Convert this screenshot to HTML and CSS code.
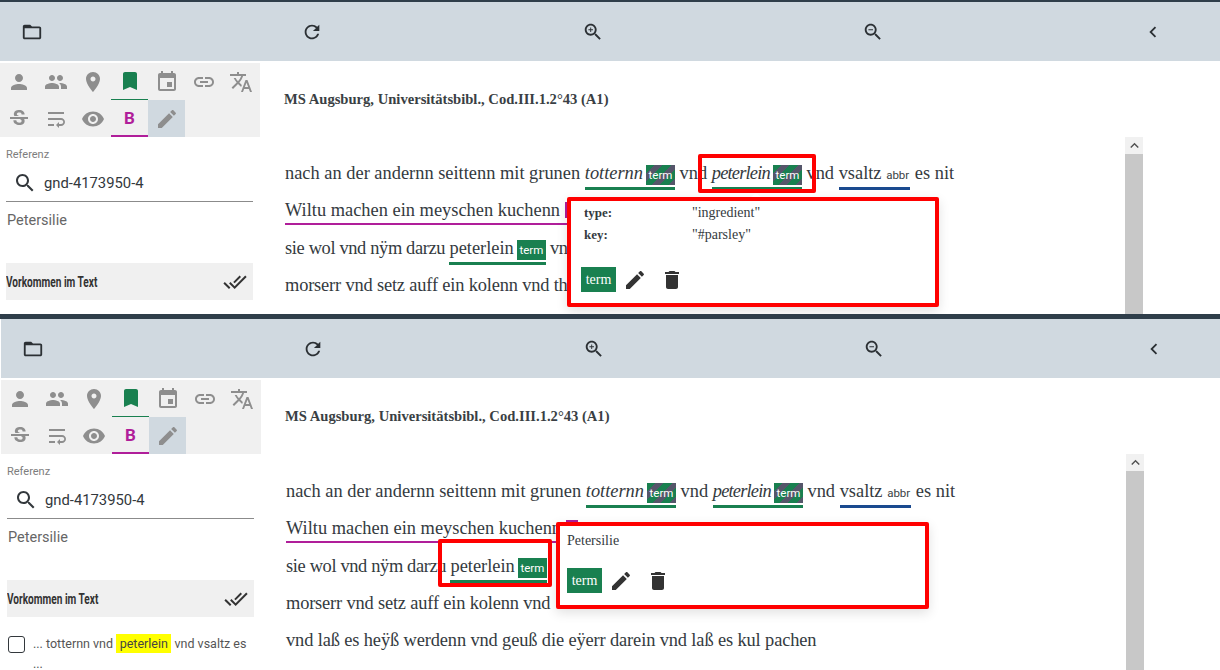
FILE: index.html
```html
<!DOCTYPE html>
<html lang="en">
  <head>
    <meta charset="UTF-8" />
    <title>Annotation</title>
    <link rel="stylesheet" href="styles.css">
  </head>
  <body>
    <svg class="sprite" xmlns="http://www.w3.org/2000/svg">
      <symbol id="i-folder" viewBox="0 0 24 24"><path d="M20 6h-8l-2-2H4c-1.1 0-1.99.9-1.99 2L2 18c0 1.1.9 2 2 2h16c1.1 0 2-.9 2-2V8c0-1.1-.9-2-2-2zm0 12H4V8h16v10z"/></symbol>
      <symbol id="i-refresh" viewBox="0 0 24 24"><path d="M17.65 6.35C16.2 4.9 14.21 4 12 4c-4.42 0-7.99 3.58-7.99 8s3.57 8 7.99 8c3.73 0 6.84-2.55 7.73-6h-2.08c-.82 2.33-3.04 4-5.65 4-3.31 0-6-2.69-6-6s2.69-6 6-6c1.66 0 3.14.69 4.22 1.78L13 11h7V4l-2.35 2.35z"/></symbol>
      <symbol id="i-zoomin" viewBox="0 0 24 24"><path d="M15.5 14h-.79l-.28-.27C15.41 12.59 16 11.11 16 9.5 16 5.91 13.09 3 9.5 3S3 5.91 3 9.5 5.91 16 9.5 16c1.61 0 3.09-.59 4.23-1.57l.27.28v.79l5 4.99L20.49 19l-4.99-5zm-6 0C7.01 14 5 11.99 5 9.5S7.01 5 9.5 5 14 7.01 14 9.5 11.99 14 9.5 14zm2.5-4h-2v2H9v-2H7V9h2V7h1v2h2v1z"/></symbol>
      <symbol id="i-zoomout" viewBox="0 0 24 24"><path d="M15.5 14h-.79l-.28-.27C15.41 12.59 16 11.11 16 9.5 16 5.91 13.09 3 9.5 3S3 5.91 3 9.5 5.91 16 9.5 16c1.61 0 3.09-.59 4.23-1.57l.27.28v.79l5 4.99L20.49 19l-4.99-5zm-6 0C7.01 14 5 11.99 5 9.5S7.01 5 9.5 5 14 7.01 14 9.5 11.99 14 9.5 14zM7 9h5v1H7z"/></symbol>
      <symbol id="i-left" viewBox="0 0 24 24"><path d="M15.41 7.41L14 6l-6 6 6 6 1.41-1.41L10.83 12z"/></symbol>
      <symbol id="i-person" viewBox="0 0 24 24"><path d="M12 12c2.21 0 4-1.79 4-4s-1.79-4-4-4-4 1.79-4 4 1.79 4 4 4zm0 2c-2.67 0-8 1.34-8 4v2h16v-2c0-2.66-5.33-4-8-4z"/></symbol>
      <symbol id="i-people" viewBox="0 0 24 24"><path d="M16 11c1.66 0 2.99-1.34 2.99-3S17.66 5 16 5c-1.66 0-3 1.34-3 3s1.34 3 3 3zm-8 0c1.66 0 2.99-1.34 2.99-3S9.66 5 8 5C6.34 5 5 6.34 5 8s1.34 3 3 3zm0 2c-2.33 0-7 1.17-7 3.5V19h14v-2.5c0-2.33-4.67-3.5-7-3.5zm8 0c-.29 0-.62.02-.97.05 1.16.84 1.97 1.97 1.97 3.45V19h6v-2.5c0-2.33-4.67-3.5-7-3.5z"/></symbol>
      <symbol id="i-place" viewBox="0 0 24 24"><path d="M12 2C8.13 2 5 5.13 5 9c0 5.25 7 13 7 13s7-7.75 7-13c0-3.87-3.13-7-7-7zm0 9.5c-1.38 0-2.5-1.12-2.5-2.5s1.12-2.5 2.5-2.5 2.5 1.12 2.5 2.5-1.12 2.5-2.5 2.5z"/></symbol>
      <symbol id="i-bookmark" viewBox="0 0 24 24"><path d="M17 3H7c-1.1 0-1.99.9-1.99 2L5 21l7-3 7 3V5c0-1.1-.9-2-2-2z"/></symbol>
      <symbol id="i-event" viewBox="0 0 24 24"><path d="M17 12h-5v5h5v-5zM16 1v2H8V1H6v2H5c-1.11 0-1.99.9-1.99 2L3 19c0 1.1.89 2 2 2h14c1.1 0 2-.9 2-2V5c0-1.1-.9-2-2-2h-1V1h-2zm3 18H5V8h14v11z"/></symbol>
      <symbol id="i-link" viewBox="0 0 24 24"><path d="M3.9 12c0-1.71 1.39-3.1 3.1-3.1h4V7H7c-2.76 0-5 2.24-5 5s2.24 5 5 5h4v-1.9H7c-1.71 0-3.1-1.39-3.1-3.1zM8 13h8v-2H8v2zm9-6h-4v1.9h4c1.71 0 3.1 1.39 3.1 3.1s-1.39 3.1-3.1 3.1h-4V17h4c2.76 0 5-2.24 5-5s-2.24-5-5-5z"/></symbol>
      <symbol id="i-translate" viewBox="0 0 24 24"><path d="M12.87 15.07l-2.54-2.51.03-.03c1.74-1.94 2.98-4.17 3.71-6.53H17V4h-7V2H8v2H1v1.99h11.17C11.5 7.92 10.44 9.75 9 11.35 8.07 10.32 7.3 9.19 6.69 8h-2c.73 1.63 1.73 3.17 2.98 4.56l-5.09 5.02L4 19l5-5 3.11 3.11.76-2.04zM18.5 10h-2L12 22h2l1.12-3h4.75L21 22h2l-4.5-12zm-2.62 7l1.62-4.33L19.12 17h-3.24z"/></symbol>
      <symbol id="i-strike" viewBox="0 0 24 24"><path d="M7.24 8.75c-.26-.48-.39-1.03-.39-1.67 0-.61.13-1.16.4-1.67.26-.5.63-.93 1.11-1.29.48-.35 1.05-.63 1.7-.83.66-.19 1.39-.29 2.18-.29.81 0 1.54.11 2.21.34.66.22 1.23.54 1.69.94.47.4.83.88 1.08 1.43.25.55.38 1.15.38 1.81h-3.01c0-.31-.05-.59-.15-.85-.09-.27-.24-.49-.44-.68-.2-.19-.45-.33-.75-.44-.3-.1-.66-.16-1.06-.16-.39 0-.74.04-1.03.13-.29.09-.53.21-.72.36-.19.16-.34.34-.44.55-.1.21-.15.43-.15.66 0 .48.25.88.74 1.21.38.25.77.48 1.41.7H7.39c-.05-.08-.11-.17-.15-.25zM21 12v-2H3v2h9.62c.18.07.4.14.55.2.37.17.66.34.87.51.21.17.35.36.43.57.07.2.11.43.11.69 0 .23-.05.45-.14.66-.09.2-.23.38-.42.53-.19.15-.42.26-.71.35-.29.08-.63.13-1.01.13-.43 0-.83-.04-1.18-.13s-.66-.23-.91-.42c-.25-.19-.45-.44-.59-.75-.14-.31-.25-.76-.25-1.21H6.4c0 .55.08 1.13.24 1.58.16.45.37.85.65 1.21.28.35.6.66.98.92.37.26.78.48 1.22.65.44.17.9.3 1.38.39.48.08.96.13 1.44.13.8 0 1.53-.09 2.18-.28s1.21-.45 1.67-.79c.46-.34.82-.77 1.07-1.27s.38-1.07.38-1.71c0-.6-.1-1.14-.31-1.61-.05-.11-.11-.23-.17-.33H21z"/></symbol>
      <symbol id="i-wrap" viewBox="0 0 24 24"><path d="M4 19h6v-2H4v2zM20 5H4v2h16V5zm-3 6H4v2h13.25c1.1 0 2 .9 2 2s-.9 2-2 2H15v-2l-3 3 3 3v-2h2c2.21 0 4-1.79 4-4s-1.79-4-4-4z"/></symbol>
      <symbol id="i-eye" viewBox="0 0 24 24"><path d="M12 4.5C7 4.5 2.73 7.61 1 12c1.73 4.39 6 7.5 11 7.5s9.27-3.11 11-7.5c-1.73-4.39-6-7.5-11-7.5zM12 17c-2.76 0-5-2.24-5-5s2.24-5 5-5 5 2.24 5 5-2.24 5-5 5zm0-8c-1.66 0-3 1.34-3 3s1.34 3 3 3 3-1.34 3-3-1.34-3-3-3z"/></symbol>
      <symbol id="i-edit" viewBox="0 0 24 24"><path d="M3 17.25V21h3.75L17.81 9.94l-3.75-3.75L3 17.25zM20.71 7.04c.39-.39.39-1.02 0-1.41l-2.34-2.34c-.39-.39-1.02-.39-1.41 0l-1.83 1.83 3.75 3.75 1.83-1.83z"/></symbol>
      <symbol id="i-delete" viewBox="0 0 24 24"><path d="M6 19c0 1.1.9 2 2 2h8c1.1 0 2-.9 2-2V7H6v12zM19 4h-3.5l-1-1h-5l-1 1H5v2h14V4z"/></symbol>
      <symbol id="i-search" viewBox="0 0 24 24"><path d="M15.5 14h-.79l-.28-.27C15.41 12.59 16 11.11 16 9.5 16 5.91 13.09 3 9.5 3S3 5.91 3 9.5 5.91 16 9.5 16c1.61 0 3.09-.59 4.23-1.57l.27.28v.79l5 4.99L20.49 19l-4.99-5zm-6 0C7.01 14 5 11.99 5 9.5S7.01 5 9.5 5 14 7.01 14 9.5 11.99 14 9.5 14z"/></symbol>
      <symbol id="i-doneall" viewBox="0 0 24 24"><path d="M18 7l-1.41-1.41-6.34 6.34 1.41 1.41L18 7zm4.24-1.41L11.66 16.17 7.48 12l-1.41 1.41L11.66 19l12-12-1.42-1.41zM.41 13.41L6 19l1.41-1.41L1.83 12 .41 13.41z"/></symbol>
      <symbol id="i-up" viewBox="0 0 24 24"><path d="M12 8l-6 6 1.41 1.41L12 10.83l4.59 4.58L18 14z"/></symbol>
    </svg>

    <!-- first screenshot -->
    <section class="shot shot-first">
      <div class="toolbar">
        <span class="tool"><svg class="icon"><use href="#i-folder"/></svg></span>
        <span class="tool"><svg class="icon"><use href="#i-refresh"/></svg></span>
        <span class="tool"><svg class="icon"><use href="#i-zoomin"/></svg></span>
        <span class="tool"><svg class="icon"><use href="#i-zoomout"/></svg></span>
        <span class="tool"><svg class="icon"><use href="#i-left"/></svg></span>
      </div>
      <div class="work">
        <aside class="side">
          <div class="tabs">
            <span class="tab"><svg class="icon"><use href="#i-person"/></svg></span>
            <span class="tab"><svg class="icon"><use href="#i-people"/></svg></span>
            <span class="tab"><svg class="icon"><use href="#i-place"/></svg></span>
            <span class="tab tab-green"><svg class="icon"><use href="#i-bookmark"/></svg></span>
            <span class="tab"><svg class="icon"><use href="#i-event"/></svg></span>
            <span class="tab"><svg class="icon"><use href="#i-link"/></svg></span>
            <span class="tab"><svg class="icon"><use href="#i-translate"/></svg></span>
            <span class="tab"><svg class="icon"><use href="#i-strike"/></svg></span>
            <span class="tab"><svg class="icon"><use href="#i-wrap"/></svg></span>
            <span class="tab"><svg class="icon"><use href="#i-eye"/></svg></span>
            <span class="tab tab-pink">B</span>
            <span class="tab tab-on"><svg class="icon"><use href="#i-edit"/></svg></span>
          </div>
          <div class="field-label">Referenz</div>
          <div class="field">
            <svg class="icon"><use href="#i-search"/></svg>
            <span>gnd-4173950-4</span>
          </div>
          <div class="field-name">Petersilie</div>
          <div class="occur">
            <span class="occur-title">Vorkommen im Text</span>
            <svg class="icon"><use href="#i-doneall"/></svg>
          </div>
        </aside>
        <main class="page">
          <h1 class="page-title">MS Augsburg, Universitätsbibl., Cod.III.1.2°43 (A1)</h1>
          <div class="reader">
            <div class="lines">
              <p class="line">nach an der andernn seittenn mit grunen <span class="ann ann-green"><i>totternn</i> <b class="tag tag-striped">term</b></span> vnd <span class="ann ann-green"><i class="narrow">peterlein</i> <b class="tag tag-striped">term</b></span> vnd <span class="ann ann-blue">vsaltz <b class="tag tag-plain">abbr</b></span> es nit</p>
              <p class="line"><span class="ann ann-pink">Wiltu machen ein meyschen kuchenn <b class="tag tag-pink"></b></span></p>
              <p class="line line-tight">sie wol vnd nÿm darzu <span class="ann ann-green">peterlein <b class="tag tag-solid">term</b></span> vnd</p>
              <p class="line line-snug">morserr vnd setz auff ein kolenn vnd thu</p>
            </div>
            <div class="scrollbar"><span class="scroll-up"><svg class="icon"><use href="#i-up"/></svg></span></div>
          </div>
        </main>
      </div>
      <div class="mark mark-a"></div>
      <div class="pop pop-a">
        <dl class="pop-attrs">
          <dt>type:</dt><dd>"ingredient"</dd>
          <dt>key:</dt><dd>"#parsley"</dd>
        </dl>
        <div class="pop-actions">
          <span class="pop-tag">term</span>
          <svg class="icon"><use href="#i-edit"/></svg>
          <svg class="icon"><use href="#i-delete"/></svg>
        </div>
      </div>
    </section>

    <!-- second screenshot -->
    <section class="shot shot-second">
      <div class="toolbar">
        <span class="tool"><svg class="icon"><use href="#i-folder"/></svg></span>
        <span class="tool"><svg class="icon"><use href="#i-refresh"/></svg></span>
        <span class="tool"><svg class="icon"><use href="#i-zoomin"/></svg></span>
        <span class="tool"><svg class="icon"><use href="#i-zoomout"/></svg></span>
        <span class="tool"><svg class="icon"><use href="#i-left"/></svg></span>
      </div>
      <div class="work">
        <aside class="side">
          <div class="tabs">
            <span class="tab"><svg class="icon"><use href="#i-person"/></svg></span>
            <span class="tab"><svg class="icon"><use href="#i-people"/></svg></span>
            <span class="tab"><svg class="icon"><use href="#i-place"/></svg></span>
            <span class="tab tab-green"><svg class="icon"><use href="#i-bookmark"/></svg></span>
            <span class="tab"><svg class="icon"><use href="#i-event"/></svg></span>
            <span class="tab"><svg class="icon"><use href="#i-link"/></svg></span>
            <span class="tab"><svg class="icon"><use href="#i-translate"/></svg></span>
            <span class="tab"><svg class="icon"><use href="#i-strike"/></svg></span>
            <span class="tab"><svg class="icon"><use href="#i-wrap"/></svg></span>
            <span class="tab"><svg class="icon"><use href="#i-eye"/></svg></span>
            <span class="tab tab-pink">B</span>
            <span class="tab tab-on"><svg class="icon"><use href="#i-edit"/></svg></span>
          </div>
          <div class="field-label">Referenz</div>
          <div class="field">
            <svg class="icon"><use href="#i-search"/></svg>
            <span>gnd-4173950-4</span>
          </div>
          <div class="field-name">Petersilie</div>
          <div class="occur">
            <span class="occur-title">Vorkommen im Text</span>
            <svg class="icon"><use href="#i-doneall"/></svg>
          </div>
          <div class="hit">
            <span class="check"></span>
            <span class="hit-text">... totternn vnd <span class="hl">peterlein</span> vnd vsaltz es ...</span>
          </div>
        </aside>
        <main class="page">
          <h1 class="page-title">MS Augsburg, Universitätsbibl., Cod.III.1.2°43 (A1)</h1>
          <div class="reader">
            <div class="lines">
              <p class="line">nach an der andernn seittenn mit grunen <span class="ann ann-green"><i>totternn</i> <b class="tag tag-striped">term</b></span> vnd <span class="ann ann-green"><i class="narrow">peterlein</i> <b class="tag tag-striped">term</b></span> vnd <span class="ann ann-blue">vsaltz <b class="tag tag-plain">abbr</b></span> es nit</p>
              <p class="line"><span class="ann ann-pink">Wiltu machen ein meyschen kuchenn <b class="tag tag-pink"></b></span></p>
              <p class="line line-tight">sie wol vnd nÿm darzu <span class="ann ann-green">peterlein <b class="tag tag-solid">term</b></span></p>
              <p class="line line-snug">morserr vnd setz auff ein kolenn vnd</p>
              <p class="line line-fit">vnd laß es heÿß werdenn vnd geuß die eÿerr darein vnd laß es kul pachen</p>
            </div>
            <div class="scrollbar"><span class="scroll-up"><svg class="icon"><use href="#i-up"/></svg></span></div>
          </div>
        </main>
      </div>
      <div class="mark mark-b"></div>
      <div class="pop pop-b">
        <div class="pop-name">Petersilie</div>
        <div class="pop-actions">
          <span class="pop-tag">term</span>
          <svg class="icon"><use href="#i-edit"/></svg>
          <svg class="icon"><use href="#i-delete"/></svg>
        </div>
      </div>
    </section>
  </body>
</html>
```

FILE: styles.css
```css
html,
body {
  margin: 0;
  height: 670px;
  overflow: hidden;
  background: #fff;
}
body {
  font-family: Roboto, "Liberation Sans", sans-serif;
  color: #2f3439;
}
.sprite {
  display: none;
}
.icon {
  width: 24px;
  height: 24px;
  display: block;
  fill: currentColor;
}

/* screenshots */
.shot {
  position: relative;
  overflow: hidden;
  box-sizing: border-box;
  border-top: 2px solid #2f3e4a;
}
.shot-first {
  height: 314px;
}
.shot-second {
  height: 356px;
  border-top-width: 5px;
  padding-left: 1px;
}

/* toolbar */
.toolbar {
  display: grid;
  grid-template-columns: repeat(5, 280.25px);
  height: 59px;
  background: #d0d9e0;
  color: #2b3034;
}
.tool {
  display: flex;
  align-items: center;
  justify-content: center;
  width: 64px;
  height: 59px;
}
.tool .icon {
  width: 22px;
  height: 22px;
}

.work {
  display: flex;
}

/* sidebar */
.side {
  flex: none;
  width: 261px;
  margin-top: 2px;
}
.tabs {
  display: grid;
  grid-template-columns: repeat(7, 37px);
  grid-auto-rows: 37px;
  width: 260px;
  background: #f0f0f0;
  color: #8e8e8e;
}
.tab {
  display: flex;
  align-items: center;
  justify-content: center;
  box-sizing: border-box;
}
.tab-green {
  color: #198050;
  border-bottom: 1px solid #198050;
}
.tab-pink {
  color: #b01e9a;
  font-weight: 700;
  font-size: 17px;
  border-bottom: 2px solid #b01e9a;
}
.tab-on {
  background: #d0d9e0;
}
.field-label {
  margin: 11px 0 0 6px;
  font-size: 11px;
  line-height: 13px;
  color: #7d7d7d;
}
.field {
  display: flex;
  align-items: center;
  gap: 7px;
  height: 33px;
  margin: 5px 8px 0 6px;
  padding: 0 0 2px 7px;
  border-bottom: 1px solid #8b8b8b;
  font-size: 14.8px;
  color: #33383c;
}
.field .icon {
  width: 24px;
  height: 24px;
}
.field-name {
  margin: 10px 0 0 7px;
  font-size: 14.5px;
  line-height: 18px;
  color: #666;
}
.occur {
  display: flex;
  align-items: center;
  justify-content: space-between;
  height: 37px;
  margin: 33px 8px 0 6px;
  padding-right: 6px;
  background: #f0f0f0;
  color: #333;
}
.occur-title {
  display: inline-block;
  transform: scaleX(0.72);
  transform-origin: left center;
  white-space: nowrap;
  font-size: 14px;
  font-weight: 700;
}
.hit {
  display: flex;
  gap: 8px;
  margin: 19px 8px 0 7px;
}
.check {
  flex: none;
  box-sizing: border-box;
  width: 17px;
  height: 17px;
  border: 1.5px solid #33383c;
  border-radius: 3px;
}
.hit-text {
  width: 216px;
  margin-top: -2px;
  font-size: 12.5px;
  line-height: 20px;
  color: #555;
}
.hl {
  padding: 2px 3.5px;
  background: #ffff00;
  color: #444;
}

/* text area */
.page {
  flex: 1;
  min-width: 0;
  padding-left: 24px;
}
.page-title {
  margin: 29px 0 0 -1px;
  font-family: "Liberation Serif", serif;
  font-size: 14.6px;
  line-height: 18px;
  font-weight: 700;
  color: #3a3f44;
}
.reader {
  display: flex;
  margin-top: 29px;
}
.lines {
  flex: none;
  width: 840px;
  padding-top: 18px;
}
.shot-second .lines {
  padding-top: 19px;
}
.line {
  margin: 0;
  height: 37.3px;
  font-family: "Liberation Serif", serif;
  font-size: 18.4px;
  line-height: 37.3px;
  color: #343a40;
  white-space: nowrap;
}
.line-tight {
  letter-spacing: -0.35px;
}
.line-tight .ann {
  letter-spacing: 0;
}
.line-snug {
  letter-spacing: -0.17px;
}
.line-fit {
  letter-spacing: -0.125px;
}
.narrow {
  letter-spacing: -0.8px;
}
.ann {
  display: inline-block;
  line-height: 22px;
  padding-bottom: 2px;
  border-bottom: 3px solid;
}
.ann-green {
  border-color: #198050;
}
.ann-blue {
  border-color: #1a4a8f;
}
.ann-pink {
  border-bottom-width: 2px;
  border-color: #b01e9a;
}
.tag {
  display: inline-block;
  font-family: Roboto, "Liberation Sans", sans-serif;
  font-size: 11.5px;
  font-weight: 400;
  letter-spacing: 0;
  line-height: 20px;
  height: 20px;
  margin-left: -1.5px;
  padding: 0 2.5px;
  vertical-align: 0;
  color: #fff;
}
.tag-solid {
  background: #198050;
}
.tag-striped {
  background: repeating-linear-gradient(135deg, #198050 0 6px, #55566a 6px 12px);
}
.tag-plain {
  color: #3a3f44;
  margin-left: -1px;
  padding: 0 1px;
}
.tag-pink {
  background: #b01e9a;
  width: 12px;
  height: 16px;
  margin-left: 0;
  padding: 0;
  vertical-align: -2px;
}
.scrollbar {
  flex: none;
  width: 18px;
  height: 400px;
  background: #c8c8c8;
}
.scroll-up {
  display: flex;
  align-items: center;
  justify-content: center;
  height: 17px;
  background: #f1f1f1;
  color: #505050;
}
.scroll-up .icon {
  width: 17px;
  height: 17px;
}

/* popovers and the red marks drawn on the screenshot */
.pop {
  position: absolute;
  box-sizing: border-box;
  border: 4px solid #ff0000;
  border-radius: 2px;
  background: #fff;
  box-shadow: 0 4px 12px rgba(0, 0, 0, 0.12);
  font-family: "Liberation Serif", serif;
  color: #343a40;
}
.pop-a {
  left: 567px;
  top: 195px;
  width: 372px;
  height: 110px;
  padding: 1px 0 0 13px;
}
.pop-a::before {
  content: "";
  position: absolute;
  left: 180px;
  top: -8px;
  border: 5px solid transparent;
  border-top-width: 0;
  border-bottom: 4px solid #fff;
}
.pop-b {
  left: 556px;
  top: 203px;
  width: 373px;
  height: 87px;
  padding: 6px 0 0 7px;
}
.pop-attrs {
  display: grid;
  grid-template-columns: 108px 1fr;
  margin: 0;
  font-size: 13px;
  line-height: 22px;
}
.pop-attrs dt {
  font-weight: 700;
}
.pop-attrs dd {
  margin: 0;
  font-size: 14px;
}
.pop-name {
  font-size: 14px;
  line-height: 18px;
}
.pop-actions {
  display: flex;
  align-items: center;
  gap: 6px;
  color: #333;
}
.pop-a .pop-actions {
  margin: 21px 0 0 -3px;
}
.pop-b .pop-actions {
  margin: 18px 0 0 0;
}
.pop-tag {
  width: 35px;
  height: 25px;
  margin-right: 1px;
  background: #198050;
  color: #fff;
  font-size: 14px;
  line-height: 25px;
  text-align: center;
}
.pop-actions .icon + .icon {
  margin-left: 7px;
}
.mark {
  position: absolute;
  box-sizing: border-box;
  border: 4px solid #ff0000;
  border-radius: 2px;
}
.mark-a {
  left: 698px;
  top: 152px;
  width: 118px;
  height: 39px;
}
.mark-b {
  left: 438px;
  top: 220px;
  width: 114px;
  height: 48px;
}
```
